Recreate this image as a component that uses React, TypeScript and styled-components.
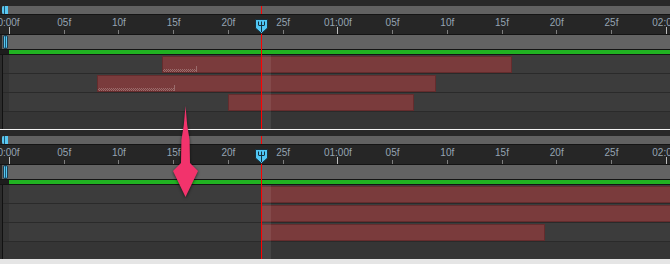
import React from 'react';
import styled, { createGlobalStyle } from 'styled-components';

// timeline scale: 10.945px per frame, frame 0 sits at x=9
const FRAME = 10.945;
const ORIGIN = 9;
const PLAYHEAD = 23;
const fx = (f: number) => ORIGIN + f * FRAME;

interface Clip {
  start: number;
  end?: number;
  trim?: number;
}

const before: Clip[] = [
  { start: 14, end: 46, trim: 17 },
  { start: 8, end: 39, trim: 15 },
  { start: 20, end: 37 },
];

const after: Clip[] = [{ start: 23 }, { start: 23 }, { start: 23, end: 49 }];

const labels = ['0:00f', '05f', '10f', '15f', '20f', '25f', '01:00f', '05f', '10f', '15f', '20f', '25f', '02:00f'];

const GlobalStyle = createGlobalStyle`
  html, body {
    margin: 0;
    padding: 0;
    background: #e5e5e5;
  }
  body {
    font-family: "Liberation Sans", Arial, sans-serif;
  }
`;

const Page = styled.div`
  position: relative;
  width: 670px;
  display: flex;
  flex-direction: column;
  gap: 1px;
  background: #f4f4f4;
  overflow: hidden;
`;

const Panel = styled.section`
  position: relative;
  height: 129px;
  display: flex;
  flex-direction: column;
  background: #141414;
  overflow: hidden;
`;

const TopStrip = styled.div`
  height: 6px;
  background: #282828;
`;

const NavRow = styled.div`
  height: 8px;
  display: flex;
  padding-left: 2px;
  margin-bottom: 1px;
  background: #282828;
`;

const NavBar = styled.div`
  position: relative;
  flex: 1;
  display: flex;
  background: #616161;
`;

const NavHandle = styled.div`
  width: 6px;
  border-radius: 2px 0 0 2px;
  background: linear-gradient(90deg, #58c8f2 0 2px, #1d5673 2px 3px, #58c8f2 3px);
`;

const NavPlayhead = styled.div`
  position: absolute;
  top: 0;
  bottom: 0;
  width: 1px;
  background: #ff0000;
`;

const Ruler = styled.div`
  position: relative;
  height: 19px;
  margin-bottom: 1px;
  background: #262626;
`;

const Label = styled.span`
  position: absolute;
  top: 2px;
  transform: translateX(-50%);
  font-size: 10px;
  line-height: 12px;
  color: #95a4b2;
  white-space: nowrap;
`;

const Tick = styled.div<{ $major?: boolean }>`
  position: absolute;
  bottom: 0;
  width: 1px;
  height: ${p => (p.$major ? 7 : 4)}px;
  background: ${p => (p.$major ? '#bcbcbc' : '#7e7e7e')};
`;

const Cti = styled.svg`
  position: absolute;
  top: 4px;
  z-index: 4;
`;

const WorkRow = styled.div`
  height: 14px;
  display: flex;
  padding-left: 2px;
  margin-bottom: 1px;
  background: #262626;
`;

const WorkBar = styled.div`
  flex: 1;
  display: flex;
  align-items: stretch;
  padding-left: 1px;
  background: #636363;
`;

const WorkHandle = styled.div`
  width: 5px;
  box-sizing: border-box;
  border: 1px solid #1b3d50;
  border-radius: 2px;
  background: linear-gradient(90deg, #58c8f2 0 1px, #1d5673 1px 2px, #58c8f2 2px);
`;

const GreenRow = styled.div`
  height: 4px;
  display: flex;
  margin-bottom: 1px;
  background: #1d1d1d;
`;

const WorkLine = styled.div`
  flex: 1;
  margin-left: 9px;
  background: #21b222;
`;

const TrackArea = styled.div`
  flex: 1;
  display: flex;
  padding-left: 2px;
  background: #2b2b2b;
`;

const TrackBody = styled.div`
  position: relative;
  flex: 1;
  display: flex;
  flex-direction: column;
  gap: 1px;
  border-left: 1px solid #111;
  background: #2a2a2a;
`;

const Row = styled.div<{ $fill?: boolean }>`
  display: grid;
  grid-template-columns: 6px 1fr;
  height: ${p => (p.$fill ? 'auto' : '18px')};
  flex: ${p => (p.$fill ? 1 : 'none')};
`;

const Gutter = styled.div`
  background: #343434;
`;

const Lane = styled.div<{ $empty?: boolean }>`
  position: relative;
  overflow: hidden;
  background: ${p => (p.$empty ? '#353535' : '#3c3c3c')};
`;

const ClipBar = styled.div`
  position: absolute;
  top: 1px;
  bottom: 0;
  box-sizing: border-box;
  display: flex;
  align-items: flex-end;
  background: #7a3b3c;
  border: 1px solid #642c2d;
`;

const Trimmed = styled.div`
  position: relative;
  height: 3px;
  background: conic-gradient(#9a6c6c 25%, transparent 0 50%, #9a6c6c 0 75%, transparent 0) 0 0 / 2px 2px;

  &::after {
    content: '';
    position: absolute;
    right: -1px;
    bottom: 0;
    width: 1px;
    height: 6px;
    background: #9a6c6c;
  }
`;

const FrameColumn = styled.div`
  position: absolute;
  top: 0;
  bottom: 0;
  background: rgba(255, 255, 255, 0.08);
  pointer-events: none;
`;

const Playhead = styled.div`
  position: absolute;
  top: 33px;
  bottom: 0;
  width: 1px;
  background: #ff0000;
  z-index: 3;
`;

const Arrow = styled.svg`
  position: absolute;
  left: 170px;
  top: 100px;
  z-index: 5;
  filter: drop-shadow(0 1px 1.5px rgba(0, 0, 0, 0.6));
`;

const Timeline = ({ clips }: { clips: Clip[] }) => {
  const head = fx(PLAYHEAD);
  return (
    <Panel>
      <TopStrip />
      <NavRow>
        <NavBar>
          <NavHandle />
          <NavPlayhead style={{ left: Math.round(head) - 2 }} />
        </NavBar>
      </NavRow>
      <Ruler>
        {labels.map((l, i) => (
          <React.Fragment key={i}>
            <Label style={{ left: fx(i * 5) - (i === 0 ? 0.5 : -0.5) }}>{l}</Label>
            <Tick $major={i % 6 === 0} style={{ left: Math.round(fx(i * 5)) }} />
          </React.Fragment>
        ))}
        <Cti width="13" height="15" viewBox="0 0 13 15" style={{ left: Math.round(head) - 6 }}>
          <path d="M0.5 0.5H12.5V9L6.5 14.5L0.5 9Z" fill="#4fc6f4" stroke="#17303e" />
          <path d="M3.5 2.5V6M6.5 2.5V6M9.5 2.5V6M3.5 6.5H9.5M6.5 6.5V13" stroke="#17303e" strokeWidth="1" fill="none" />
        </Cti>
      </Ruler>
      <WorkRow>
        <WorkBar>
          <WorkHandle />
        </WorkBar>
      </WorkRow>
      <GreenRow>
        <WorkLine />
      </GreenRow>
      <TrackArea>
        <TrackBody>
          {clips.map((c, i) => {
            const left = c.start * FRAME;
            const width = c.end !== undefined ? (c.end - c.start) * FRAME : 800;
            return (
              <Row key={i}>
                <Gutter />
                <Lane>
                  <ClipBar style={{ left, width }}>
                    {c.trim !== undefined && <Trimmed style={{ width: (c.trim - c.start) * FRAME }} />}
                  </ClipBar>
                </Lane>
              </Row>
            );
          })}
          <Row $fill>
            <Gutter />
            <Lane $empty />
          </Row>
          <FrameColumn style={{ left: head - 3 + 0.3, width: FRAME - 1 }} />
        </TrackBody>
      </TrackArea>
      <Playhead style={{ left: Math.round(head) }} />
    </Panel>
  );
};

const App = () => (
  <>
    <GlobalStyle />
    <Page>
      <Timeline clips={before} />
      <Timeline clips={after} />
      <Arrow width="32" height="100" viewBox="0 0 32 100">
        <path
          d="M15.5 6L17.2 25L19.6 40L20 63L28 71L15.5 97L3 71L11 63L11.4 40L13.8 25Z"
          fill="#f2336c"
        />
      </Arrow>
    </Page>
  </>
);

export default App;
